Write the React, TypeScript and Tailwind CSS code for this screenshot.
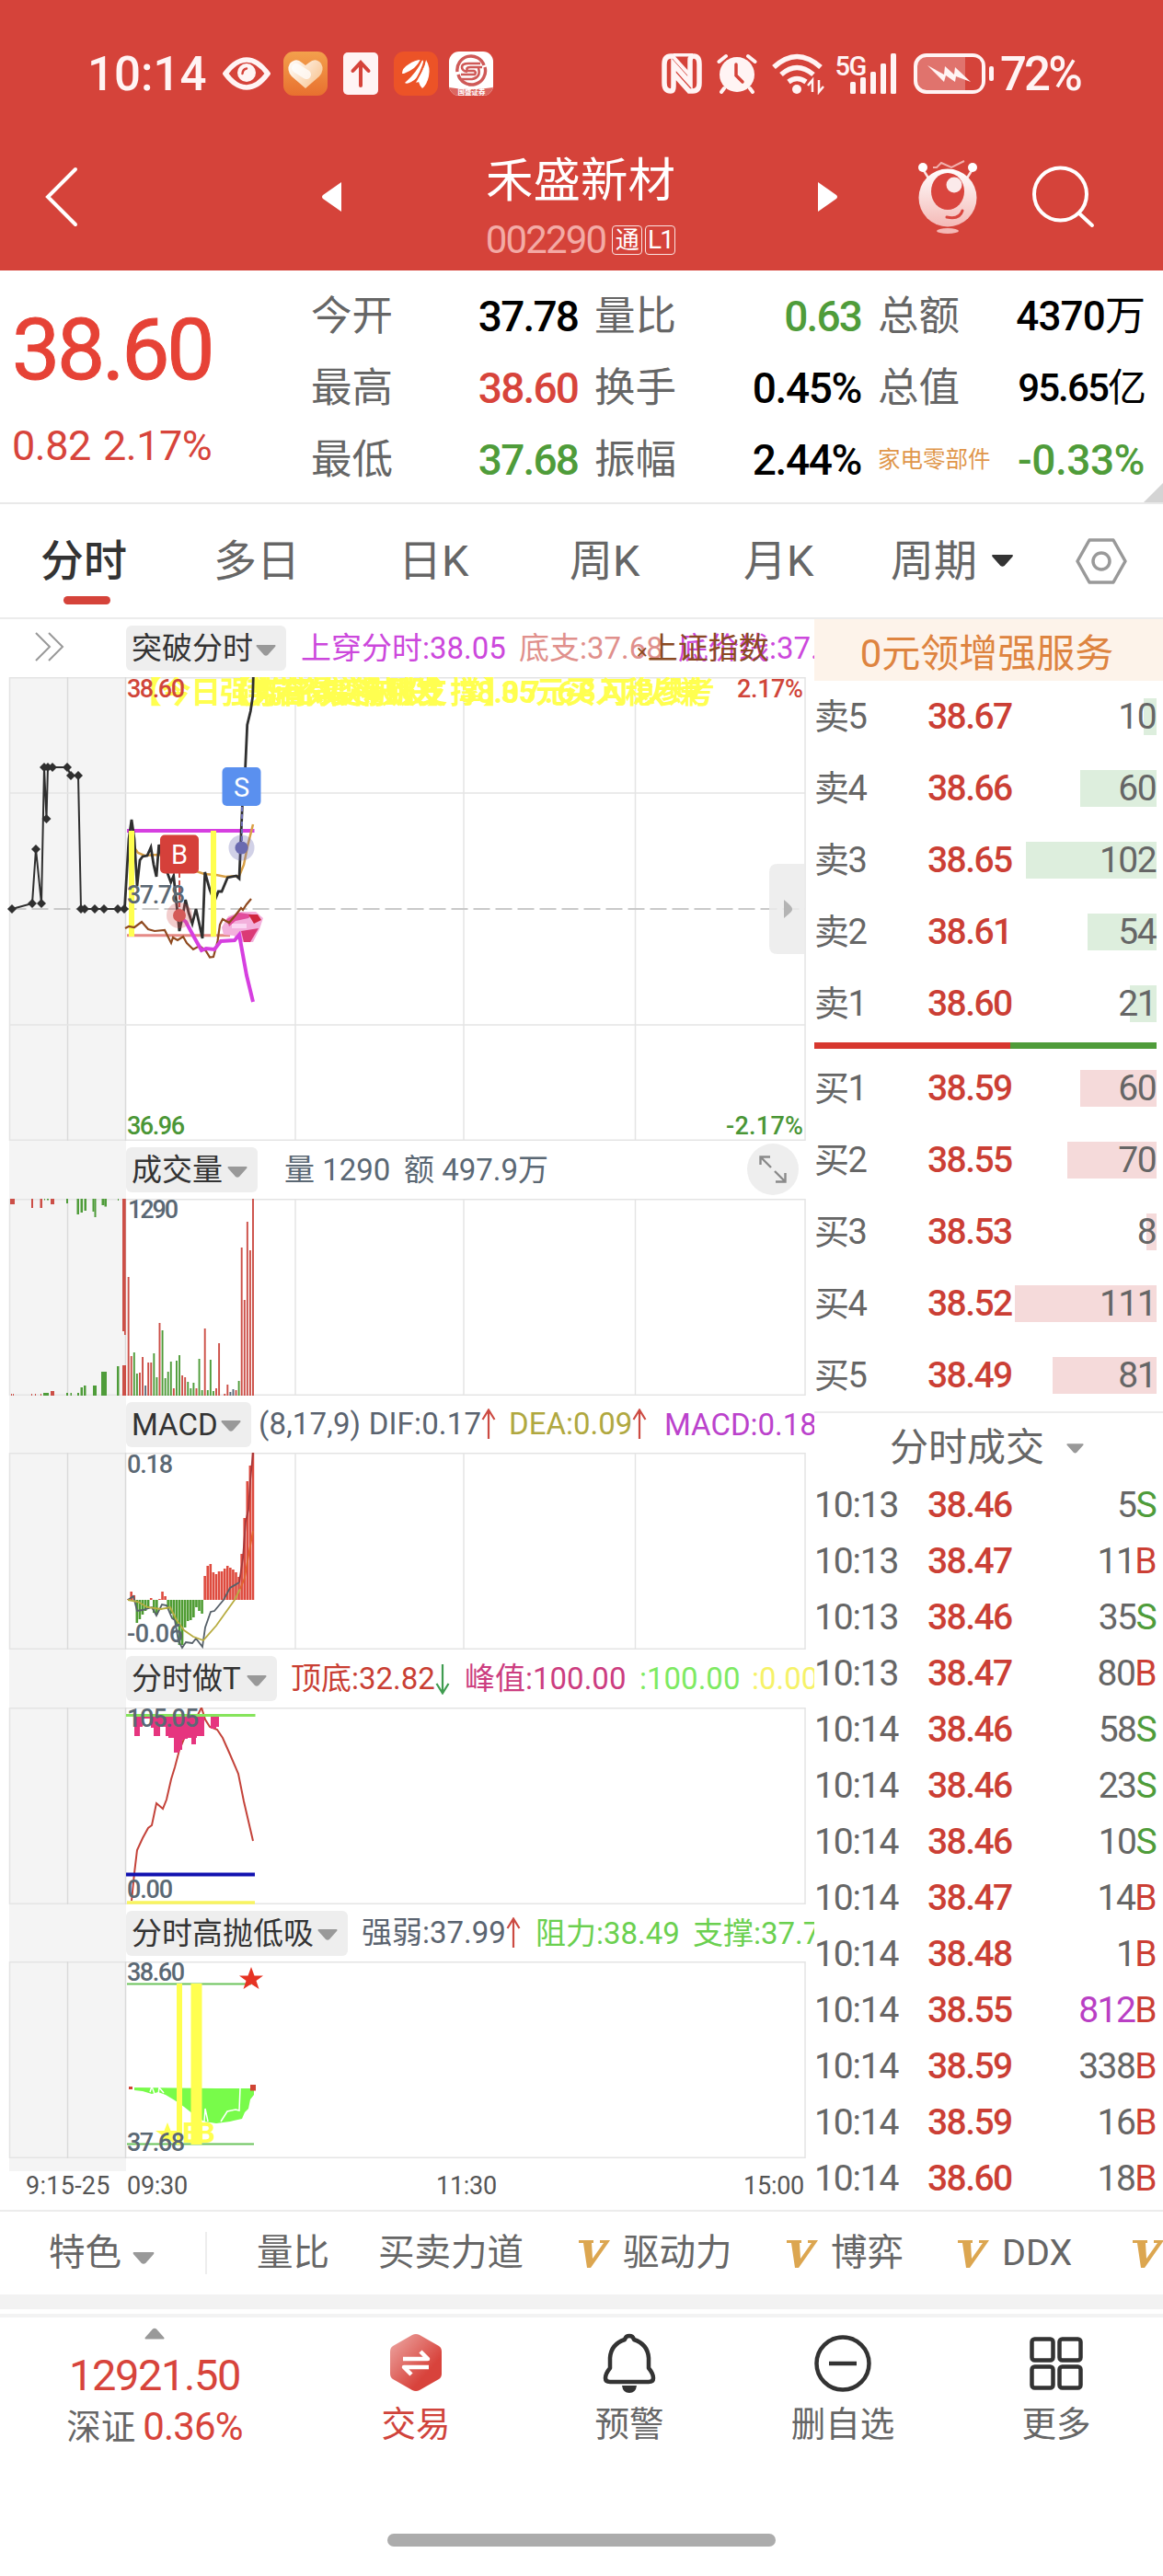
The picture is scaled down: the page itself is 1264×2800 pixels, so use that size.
import React from "react";
import clsx from "clsx";

type Side = "S" | "B";
type BarColor = "r" | "g" | "n";

interface BookRow {
  label: string;
  price: string;
  volume: string;
  width: number;
}

interface Trade {
  time: string;
  price: string;
  volume: string;
  side: Side;
  large?: boolean;
}

interface Metric {
  text: string;
  className: string;
  arrow?: "up" | "down";
}

const SELLS: BookRow[] = [
  { label: "卖5", price: "38.67", volume: "10", width: 14 },
  { label: "卖4", price: "38.66", volume: "60", width: 83 },
  { label: "卖3", price: "38.65", volume: "102", width: 142 },
  { label: "卖2", price: "38.61", volume: "54", width: 75 },
  { label: "卖1", price: "38.60", volume: "21", width: 29 },
];

const BUYS: BookRow[] = [
  { label: "买1", price: "38.59", volume: "60", width: 83 },
  { label: "买2", price: "38.55", volume: "70", width: 97 },
  { label: "买3", price: "38.53", volume: "8", width: 11 },
  { label: "买4", price: "38.52", volume: "111", width: 154 },
  { label: "买5", price: "38.49", volume: "81", width: 113 },
];

const TRADES: Trade[] = [
  { time: "10:13", price: "38.46", volume: "5", side: "S" },
  { time: "10:13", price: "38.47", volume: "11", side: "B" },
  { time: "10:13", price: "38.46", volume: "35", side: "S" },
  { time: "10:13", price: "38.47", volume: "80", side: "B" },
  { time: "10:14", price: "38.46", volume: "58", side: "S" },
  { time: "10:14", price: "38.46", volume: "23", side: "S" },
  { time: "10:14", price: "38.46", volume: "10", side: "S" },
  { time: "10:14", price: "38.47", volume: "14", side: "B" },
  { time: "10:14", price: "38.48", volume: "1", side: "B" },
  { time: "10:14", price: "38.55", volume: "812", side: "B", large: true },
  { time: "10:14", price: "38.59", volume: "338", side: "B" },
  { time: "10:14", price: "38.59", volume: "16", side: "B" },
  { time: "10:14", price: "38.60", volume: "18", side: "B" },
];

// one bar per minute from 09:30, height in chart pixels
const VOLUME: Array<[number, BarColor]> = [
  [129, "r"], [43, "r"], [47, "g"], [24, "g"], [25, "r"], [42, "r"], [11, "n"], [36, "r"], [36, "r"],
  [46, "g"], [20, "g"], [79, "r"], [71, "g"], [19, "g"], [26, "g"], [37, "g"], [8, "r"], [38, "g"],
  [44, "g"], [22, "r"], [20, "r"], [15, "g"], [8, "g"], [14, "g"], [8, "r"], [40, "g"], [6, "g"],
  [73, "r"], [6, "g"], [39, "g"], [5, "g"], [8, "r"], [57, "r"], [0, "r"], [2, "r"], [12, "r"],
  [4, "n"], [7, "n"], [6, "r"], [16, "g"], [161, "r"], [104, "r"], [189, "r"], [158, "r"], [214, "r"],
];

// x, width, height
const AUCTION_TOP: Array<[number, number, number, BarColor]> = [
  [11, 5, 6, "r"], [34, 2, 10, "r"], [43.5, 2.5, 10, "r"], [48, 1, 1.5, "g"], [51, 2, 1.5, "g"], [55, 4, 6, "r"],
  [72, 2, 5, "g"], [83.5, 2.5, 17, "g"], [87.5, 2.5, 15, "g"], [91.5, 2.5, 13, "g"], [100.5, 2, 14, "g"],
  [102.5, 2, 20, "g"], [110.5, 3, 7, "g"], [113.5, 2.5, 8.5, "g"], [128, 1, 2, "g"], [133, 2, 144, "r"], [135, 1.7, 148, "r"],
];

const AUCTION_BOTTOM: Array<[number, number, number, BarColor]> = [
  [12, 1, 2, "r"], [14, 1, 2, "r"], [34, 1, 2, "r"], [38, 1, 2, "r"], [44, 1, 2, "r"], [47, 6, 3, "g"], [55, 4, 5, "r"],
  [72, 2, 3, "g"], [76.5, 1.5, 3, "g"], [84, 2, 3, "g"], [87.5, 2.5, 9, "g"], [91, 2.5, 11, "g"], [101, 4, 11, "g"],
  [110, 6, 26, "g"], [127, 2.5, 32, "g"], [133, 4, 33, "r"],
];

const MACD = [
  1, 9, 5, -25, -21, -16, -12, -9, 2, -14, -16, 1, 9, 4, -10, -15, -21, -27, -49, -49, -30, -23, -22, -19, -8, -12, -15,
  26, 37, 39, 30, 28, 31, 31, 34, 37, 35, 33, 30, 25, 50, 89, 129, 146, 160,
];

const minuteX = (i: number) => 139.7 + i * 3.076;

const fillOf = (c: BarColor) => (c === "r" ? "#cc4f47" : c === "g" ? "#4f9c3a" : "#5b6b78");

function Grid({ height, rows = [], cols = [321, 504, 690.5] }: { height: number; rows?: number[]; cols?: number[] }) {
  return (
    <g fill="none" stroke="#e4e4e4" strokeWidth="1.5">
      <rect x="10.5" y="0.75" width="864.5" height={height - 1.5} />
      <path d={`M73.5 0V${height}M136.5 0V${height}`} stroke="#dadada" />
      {cols.map((x) => (
        <path key={x} d={`M${x} 0V${height}`} />
      ))}
      {rows.map((y) => (
        <path key={y} d={`M10.5 ${y}H875`} />
      ))}
    </g>
  );
}

interface AxisTextProps {
  x: number;
  y: number;
  width: number;
  fill?: string;
  children: string;
}

function AxisText({ x, y, width, fill = "#5b6874", children }: AxisTextProps) {
  return (
    <text x={x} y={y} fill={fill} fontSize="27" fontWeight="500" textLength={width}>
      {children}
    </text>
  );
}

function PriceChart() {
  const auction = [
    [13, 252], [35, 246], [39, 187], [45, 246], [48, 98], [50.5, 154], [52, 98], [57, 98], [73, 98], [77, 107],
    [85, 107], [88, 252], [92, 252], [103, 252], [113, 252], [128, 252], [135, 252],
  ];
  return (
    <svg width="885" height="504" viewBox="0 0 885 504" className="block">
      <Grid height={504} rows={[126, 378]} />
      <path d="M10.5 252H875" stroke="#c9c9c9" strokeWidth="2" strokeDasharray="18 6" />
      <g fill="#ffff50" fontSize="33" fontWeight="700">
        <text x="143" y="28" textLength="354">【今日强势有效突破股】</text>
        <text x="240" y="28" textLength="318">【前密集得到支撑】</text>
        <text x="268" y="28" textLength="215">势若得变有破发</text>
        <text x="500" y="28" textLength="277">38.05元买入稳参考</text>
        <text x="545" y="28" textLength="215">37.68可以赚</text>
      </g>
      <path d="M138 167H276.5" stroke="#d63fe0" strokeWidth="4" />
      <path d="M138 280.7H250" stroke="#e58a86" strokeWidth="3" />
      <path
        d="M145 184L150 191L157 194L172 193L200 200L213 211L222 214L235 215L245 217L260 216L265 204L269 184L275 160"
        fill="none"
        stroke="#d9a045"
        strokeWidth="2.5"
      />
      <g fill="none" stroke="#2f2f2f">
        <path d={"M" + auction.map((p) => p.join(" ")).join("L")} strokeWidth="2" />
        <path
          d="M135.5 251L140 176L143 155L146 176L149 227L152 199L155 195L160 194L164 185L167 204L170 217L172.7 182L178 206L182 213L185.7 223L188.7 216L195 276L198 262L201.7 242L205 256L209 268L213 252L217 270L220 284L222.7 212L228 231L233 244L237.3 233L241 233L247.3 218L256.7 216L260 219L263.3 141L266.7 97L268.7 52L272.3 37L274.7 21L275.3 0"
          strokeWidth="2.8"
        />
      </g>
      {auction.map(([x, y], i) => (
        <path key={i} d={`M${x - 5} ${y}L${x} ${y - 5}L${x + 5} ${y}L${x} ${y + 5}Z`} fill="#2f2f2f" />
      ))}
      <path d="M143 167V282M232 167V282" stroke="#ffff50" strokeWidth="6" />
      <g>
        <path d="M241 272L248 260L262 255L278 255L286 262L282 274L275 288L264 288L254 281L243 280Z" fill="#f3b0dc" />
        <path d="M246 263L260 256L274 258L270 262L256 265L249 271Z" fill="#e24c9c" />
        <path d="M270 258H280L284 264L276 268Z" fill="#d0263f" />
        <path d="M252 268H268V273H252Z" fill="#fbd6f2" />
        <path d="M262 276L281 273L272 288H265Z" fill="#db3a76" />
      </g>
      <path
        d="M136 273L140 271L146 272L154 266L161 274L168 276L179 275L186 289L188 283L193 286L199 282L203 289L210 296L217 292L224 298L228 304.5L232 304L236.5 287L239 269L242 263L249 267L255 260L262 251L264 253L268 247L273 241"
        fill="none"
        stroke="#8f4a20"
        strokeWidth="2.2"
      />
      <path
        d="M195 260L202 266L210 281L219 297L224 295L233 296L240 287L255 286L260 280L268 324L275 353"
        fill="none"
        stroke="#d63fe0"
        strokeWidth="4"
      />
      <AxisText x={138} y={22} width={63} fill="#d0453a">38.60</AxisText>
      <AxisText x={138} y={245.5} width={63}>37.78</AxisText>
      <AxisText x={138} y={497} width={63} fill="#4a9636">36.96</AxisText>
      <AxisText x={801} y={22} width={72} fill="#d0453a">2.17%</AxisText>
      <AxisText x={789} y={497} width={84} fill="#4a9636">-2.17%</AxisText>

      <path d="M195 213V252" stroke="#d0504a" strokeWidth="2" strokeDasharray="5 3" />
      <circle cx="195" cy="259" r="14" fill="#d45a58" fillOpacity="0.3" />
      <circle cx="195" cy="259" r="7" fill="#d45a58" />
      <path d="M263 141V180" stroke="#6f6fb5" strokeWidth="2" strokeDasharray="5 3" />
      <circle cx="262.5" cy="185.5" r="14" fill="#6f6fb5" fillOpacity="0.32" />
      <circle cx="262.5" cy="185.5" r="7" fill="#6a6ab0" />
      <rect x="174" y="171.5" width="42" height="42" rx="5" fill="#d5403a" />
      <rect x="241.5" y="98" width="42" height="42" rx="5" fill="#5a90ef" />
      <g fill="#fff" fontSize="29" textAnchor="middle">
        <text x="195" y="203">B</text>
        <text x="262.5" y="129.5">S</text>
      </g>
      <path d="M875 203H845Q836 203 836 212V292Q836 301 845 301H875Z" fill="#ebebeb" fillOpacity="0.85" />
      <path d="M852 242Q862 250 861 252.5Q862 254 852 262Z" fill="#b4b4b4" />
    </svg>
  );
}

function VolumeChart() {
  return (
    <svg width="885" height="214" viewBox="0 0 885 214" className="block">
      <Grid height={214} />
      {AUCTION_TOP.map(([x, w, h, c], i) => (
        <rect key={i} x={x} y="0" width={w} height={h} fill={fillOf(c)} />
      ))}
      {AUCTION_BOTTOM.map(([x, w, h, c], i) => (
        <rect key={i} x={x} y={214 - h} width={w} height={h} fill={fillOf(c)} />
      ))}
      {VOLUME.map(([h, c], i) => (
        <rect key={i} x={minuteX(i) - 1} y={214 - h} width="1.9" height={h} fill={fillOf(c)} />
      ))}
      <AxisText x={139} y={21} width={55}>1290</AxisText>
    </svg>
  );
}

function MacdChart() {
  return (
    <svg width="885" height="214" viewBox="0 0 885 214" className="block">
      <Grid height={214} />
      {MACD.map((v, i) => (
        <rect
          key={i}
          x={minuteX(i) - 1.4}
          y={v > 0 ? 160 - v : 160}
          width="2.6"
          height={Math.abs(v)}
          fill={v > 0 ? "#de4b3f" : "#4f9c33"}
        />
      ))}
      <g fill="none" strokeWidth="1.8">
        <path
          d="M139 160L145 156L149 172L155 171L165 168L170 177L176 165L181 166L187 180L190 182L194 205L198 212L202 206L209 207L213 202L220 211L223 190L229 173L233 172L243 160L250 147L260 141"
          stroke="#566069"
        />
        <path d="M260 141L264 115L267 75L270 62L272 30L275 0" stroke="#a5383a" />
        <path d="M139 160L150 162L160 168L175 170L185 168L192 182L200 193L210 200L221 204L235 188L255 160L261 148" stroke="#b8ac40" />
        <path d="M261 148L266 136L270 112L275 85" stroke="#e0642e" />
      </g>
      <AxisText x={138} y={22} width={50}>0.18</AxisText>
      <AxisText x={138} y={206} width={61}>-0.06</AxisText>
    </svg>
  );
}

function TopBottomChart() {
  return (
    <svg width="885" height="214" viewBox="0 0 885 214" className="block">
      <Grid height={214} cols={[]} />
      <path
        d="M143 210L146 180L149 155L155 142L161 131L165 128L170 104L177 110L181 100L186 78L190 65L195 46L204 24L213 12L219 0L223 13L228 21L236 24L242 33L250 51L259 72L265 102L275 145"
        fill="none"
        stroke="#c4433a"
        strokeWidth="2"
      />
      <path
        d="M146 10H222V31H214V33H213V40H208V33H204V34H201V35H198V46H195V49H189V33H183V31H180V21H174V31H167V22H164V12H155V21H152V31H146ZM229 10H238V21H235V23H229Z"
        fill="#e6357f"
      />
      <path d="M137 8.5H277.5" stroke="#86e45c" strokeWidth="3" />
      <path d="M137 181.5H277" stroke="#1212b0" strokeWidth="4" />
      <path d="M138 212H277" stroke="#f8f460" strokeWidth="3.5" />
      <AxisText x={138} y={21} width={78}>105.05</AxisText>
      <AxisText x={138} y={207} width={50}>0.00</AxisText>
    </svg>
  );
}

function SwingChart() {
  return (
    <svg width="885" height="214" viewBox="0 0 885 214" className="block">
      <Grid height={214} cols={[]} />
      <path d="M138 24.5H273M138 198.5H276" stroke="#6cc45c" strokeWidth="2" />
      <path
        d="M146 137L235 138H276V145L272 150L270 160L266 164L263 171L250 174L235 176L222 174L210 166L200 158L190 151L180 145L172 142L165 144L155 141L146 140Z"
        fill="#78fb4a"
      />
      <path
        d="M163 142L165 136L168 144M172 145L173 137L178 143M222 174L223 160L226 174M240 174L247 163L256 161L260 162L261 138"
        fill="none"
        stroke="#fff"
        strokeWidth="1.5"
      />
      <path d="M140 136H144V139H140ZM272 134H278V140.5H272Z" fill="#cf4434" />
      <path d="M195 24V199M210.5 24V199M216.5 24V199" stroke="#ffff50" strokeWidth="6" />
      <path d="M182 175L185.5 184H195L187.5 189.5L190 198L182 193L174 198L177 189.5L169 184H178.5Z" fill="#ffff50" />
      <text x="198" y="197" fill="#ffff50" fontSize="32" fontWeight="700" textLength="36">BB</text>
      <path d="M273 6L276.5 15.5H286L278.5 21L281.5 30L273 24.5L264.5 30L267.5 21L260 15.5H269.5Z" fill="#e63323" />
      <AxisText x={138} y={21} width={63}>38.60</AxisText>
      <AxisText x={138} y={206} width={63}>37.68</AxisText>
    </svg>
  );
}

function Triangle({ className }: { className?: string }) {
  return (
    <svg viewBox="0 0 22 12" className={clsx("shrink-0", className)} fill="currentColor">
      <path d="M1 0H21Q22 1 21 2L13 11Q11 12.5 9 11L1 2Q0 1 1 0Z" />
    </svg>
  );
}

function MetricArrow({ dir }: { dir: "up" | "down" }) {
  return (
    <svg
      viewBox="0 0 16 34"
      className={clsx("inline-block h-[34px] w-4 align-[-6px]", dir === "up" ? "text-[#cc4a42]" : "rotate-180 text-[#3f9c50]")}
      fill="none"
      stroke="currentColor"
      strokeWidth="2.2"
    >
      <path d="M8 33V2M1.5 12L8 1.5L14.5 12" />
    </svg>
  );
}

interface PanelHeaderProps {
  name: string;
  className: string;
  chipClass: string;
  metrics: Metric[];
  children?: React.ReactNode;
}

function PanelHeader({ name, className, chipClass, metrics, children }: PanelHeaderProps) {
  return (
    <div className={clsx("relative flex items-center overflow-hidden pl-[137px] whitespace-nowrap", className)}>
      <div className={clsx("flex h-[49px] shrink-0 items-center justify-between rounded-md bg-[#eeeeee] pr-[11px] pl-[6px] text-[33px] text-[#333]", chipClass)}>
        <span>{name}</span>
        <Triangle className="mt-1 h-3 w-[22px] text-[#999]" />
      </div>
      {metrics.map((m) => (
        <span key={m.text} className={clsx("shrink-0 text-[33px]", m.className)}>
          {m.text}
          {m.arrow && <MetricArrow dir={m.arrow} />}
        </span>
      ))}
      {children}
    </div>
  );
}

function ChartColumn() {
  return (
    <div className="w-[885px] shrink-0">
      <PanelHeader
        name="突破分时"
        className="h-[63px]"
        chipClass="w-[174px]"
        metrics={[
          { text: "上穿分时:38.05", className: "ml-4 w-[237px] text-[#cc48dc]" },
          { text: "底支:37.68", className: "w-[173px] text-[#e0908c]" },
          { text: "底价线:37.68", className: "text-[#cc48dc]" },
        ]}
      >
        <span className="absolute top-[15px] left-[692px] text-[33px] text-[#8a4a22]">
          <span className="text-[22px]">×</span>上证指数
        </span>
        <svg viewBox="0 0 32 32" className="absolute top-[14px] left-[38px] size-8" fill="none" stroke="#999" strokeWidth="2">
          <path d="M1 1L16 16L1 31M15 1L30 16L15 31" />
        </svg>
      </PanelHeader>
      <div className="bg-[linear-gradient(90deg,transparent_10px,#f4f4f4_10px,#f4f4f4_137px,transparent_137px)] pb-[14px]">
        <PriceChart />
        <PanelHeader
          name="成交量"
          className="h-[63px]"
          chipClass="w-[143px]"
          metrics={[
            { text: "量 1290", className: "ml-[29px] w-[130px] text-[#5b6874]" },
            { text: "额 497.9万", className: "text-[#5b6874]" },
          ]}
        >
          <div className="absolute top-[3px] left-[812px] flex size-14 items-center justify-center rounded-full bg-[#eeeeee]">
            <svg viewBox="0 0 30 30" className="size-[30px]" fill="none" stroke="#8a8a8a" strokeWidth="2.4">
              <path d="M1.5 10V1.5H12M1.5 1.5L13 13M17 17L28.5 28.5M28.5 19V28.5H18" />
            </svg>
          </div>
        </PanelHeader>
        <VolumeChart />
        <PanelHeader
          name="MACD"
          className="h-[62px]"
          chipClass="w-[136px]"
          metrics={[
            { text: "(8,17,9) DIF:0.17", arrow: "up", className: "ml-2 w-[272px] tracking-[0.005em] text-[#5b6470]" },
            { text: "DEA:0.09", arrow: "up", className: "w-[169px] text-[#b0a840]" },
            { text: "MACD:0.18", className: "text-[#bb42cc]" },
          ]}
        />
        <MacdChart />
        <PanelHeader
          name="分时做T"
          className="h-[63px]"
          chipClass="w-[164px]"
          metrics={[
            { text: "顶底:32.82", arrow: "down", className: "ml-[15px] w-[189px] text-[#c93f34]" },
            { text: "峰值:100.00", className: "w-[190px] text-[#cc3d80]" },
            { text: ":100.00", className: "w-[122px] text-[#7eea62]" },
            { text: ":0.00", className: "text-[#f6f268]" },
          ]}
        />
        <TopBottomChart />
        <PanelHeader
          name="分时高抛低吸"
          className="h-[62px]"
          chipClass="w-[241px]"
          metrics={[
            { text: "强弱:37.99", arrow: "up", className: "ml-[15px] w-[189px] text-[#5b6470]" },
            { text: "阻力:38.49", className: "w-[171px] text-[#6bd050]" },
            { text: "支撑:37.71", className: "text-[#6bd050]" },
          ]}
        />
        <SwingChart />
      </div>
      <div className="flex h-8 items-center pr-[11px] pl-7 text-[27px] text-[#555]">
        <span className="w-[110px] tracking-[0.01em]">9:15-25</span>
        <span className="w-[336px] tracking-[-0.01em]">09:30</span>
        <span className="tracking-[-0.01em]">11:30</span>
        <span className="ml-auto tracking-[-0.01em]">15:00</span>
      </div>
    </div>
  );
}

function BookLine({ row, sell }: { row: BookRow; sell?: boolean }) {
  return (
    <div className="relative flex h-[78px] items-center pr-2 text-[39px] tracking-[-0.04em] text-[#666]">
      <div
        className={clsx("absolute top-[19px] right-[7px] h-10", sell ? "bg-[#ddeedd]" : "bg-[#f5dada]")}
        style={{ width: row.width }}
      />
      <span className="relative w-[123px] text-[38px]">{row.label}</span>
      <span className="relative font-medium text-[#cb3f35]">{row.price}</span>
      <span className="relative ml-auto">{row.volume}</span>
    </div>
  );
}

function OrderColumn() {
  return (
    <div className="flex-1">
      <div className="flex h-[67px] items-center justify-center bg-[#fdf3ea] pt-2 pr-1 text-[42px] text-[#de8440]">
        <span>0元领增强服务</span>
      </div>
      {SELLS.map((row) => (
        <BookLine key={row.label} row={row} sell />
      ))}
      <div className="mt-[3px] mr-[7px] mb-1 flex h-[7px]">
        <div className="w-[213px] bg-[#d7382f]" />
        <div className="flex-1 bg-[#4f9c3a]" />
      </div>
      {BUYS.map((row) => (
        <BookLine key={row.label} row={row} />
      ))}
      <div className="mb-[2px] flex h-[70px] items-center border-t-2 border-[#ececec] pt-2 pl-[82px] text-[42px] text-[#666]">
        分时成交
        <Triangle className="ml-6 h-[11px] w-[19px] text-[#999]" />
      </div>
      {TRADES.map((t, i) => (
        <div key={i} className="flex h-[61px] items-center pr-2 text-[39px] tracking-[-0.04em] text-[#666]">
          <span className="w-[123px] tracking-[-0.03em]">{t.time}</span>
          <span className="font-medium text-[#cb3f35]">{t.price}</span>
          <span className={clsx("ml-auto", t.large && "text-[#b93fc4]")}>{t.volume}</span>
          <span className={t.side === "B" ? "text-[#cb3f35]" : "text-[#4f9c3a]"}>{t.side}</span>
        </div>
      ))}
    </div>
  );
}

function StatusBar() {
  return (
    <div className="flex h-[160px] items-center pr-[90px] pl-[95px] text-[51px] font-medium tracking-[-0.02em] text-[#fff4f4]">
      <span className="w-[147px] tracking-normal">10:14</span>
      <svg viewBox="0 0 52 36" className="h-9 w-[52px]" fill="none">
        <path d="M3 18Q14 3 26 3T49 18Q38 33 26 33T3 18Z" stroke="#fff4f4" strokeWidth="5.5" />
        <circle cx="26" cy="17" r="10" fill="#fff4f4" />
        <path d="M21.5 18Q22 13 26 12.5" stroke="#d5433a" strokeWidth="2.5" strokeLinecap="round" />
      </svg>
      <svg viewBox="0 0 48 48" className="ml-[14px] size-12">
        <defs>
          <linearGradient id="heartTile" x1="0" y1="0" x2="0" y2="1">
            <stop offset="0" stopColor="#f3a04c" />
            <stop offset="1" stopColor="#e8702f" />
          </linearGradient>
          <linearGradient id="heart" x1="0" y1="0" x2="1" y2="0.6">
            <stop offset="0" stopColor="#fff" />
            <stop offset="1" stopColor="#f9c898" />
          </linearGradient>
        </defs>
        <rect width="48" height="48" rx="11" fill="url(#heartTile)" />
        <path d="M24 40L9 27Q3 20 7 13Q14 6 20 12L24 15L28 12Q35 6 41 13Q45 20 39 27Z" fill="url(#heart)" />
        <path d="M14 18L25 25" stroke="#fff" strokeWidth="10" strokeLinecap="round" opacity="0.75" />
      </svg>
      <svg viewBox="0 0 38 46" className="ml-[17px] h-[46px] w-[38px]">
        <rect width="38" height="46" rx="5" fill="#fff4f4" />
        <path d="M19 36V11M10.5 20L19 11L27.5 20" fill="none" stroke="#d5433a" strokeWidth="4" strokeLinecap="round" />
      </svg>
      <svg viewBox="0 0 48 48" className="ml-[17px] size-12">
        <rect width="48" height="48" rx="11" fill="#ec5327" />
        <g fill="#fff">
          <path d="M9 24Q9 18 16 14Q23 9 30 9Q24 19 11 24Z" />
          <path d="M12 34Q25 23 31 9Q35 13 30 22Q26 29 19 33Q14 36 12 34Z" />
          <path d="M23 33Q33 21 35 9Q40 17 38 27Q36 36 31 40Q28 37 27 33Q25 34 23 33Z" />
        </g>
        <path d="M9 30Q24 22 31 7M20 38Q31 22 34 8" fill="none" stroke="#ec5327" strokeWidth="2" />
      </svg>
      <svg viewBox="0 0 48 48" className="ml-3 size-12 overflow-hidden rounded-[11px]">
        <rect width="48" height="48" fill="#fff" />
        <path d="M0 39Q24 43 48 39V48H0Z" fill="#dc6660" />
        <g fill="none" stroke="#cf5a58" strokeWidth="3.4">
          <path d="M9 22A15 15 0 0 1 38 15M39 17A15 15 0 0 1 10 25" />
          <path d="M34 13H21Q14 13 14 17Q14 21 20 22M36 17H23Q18 17 20 21H27Q30 22 28 25H13M32 18Q35 28 25 30H14" strokeWidth="2.6" />
        </g>
        <text x="9.5" y="47" fontSize="7.5" fontWeight="700" fill="#fff" textLength="29">国盛证券</text>
      </svg>

      <svg viewBox="0 0 44 44" className="ml-auto size-11" fill="none" stroke="#fff4f4">
        <path d="M14 3H10Q3 3 3 12V32Q3 41 10 41Q13 41 13 36V12L31 32V8Q31 3 35 3Q41 3 41 12V32Q41 41 34 41H30L13 22" strokeWidth="5.5" />
        <path d="M12 3L31 24M13 1.5H34" strokeWidth="4" />
      </svg>
      <svg viewBox="0 0 44 44" className="ml-4 size-11" fill="none" stroke="#fff4f4" strokeLinecap="round">
        <circle cx="22" cy="23" r="19" fill="#fff4f4" stroke="none" />
        <path d="M2.5 9L10 3M41.5 9L34 3" strokeWidth="4" />
        <path d="M8 38L5 42M36 38L39 42" strokeWidth="4" />
        <path d="M21 12V24L28 31" stroke="#d5433a" strokeWidth="3.5" />
      </svg>
      <svg viewBox="0 0 58 46" className="ml-4 h-[46px] w-[58px]" fill="none" stroke="#fff4f4" strokeWidth="5.5">
        <path d="M2 16Q27 -7 53 16" />
        <path d="M10 24Q27 9 45 24" />
        <path d="M18 32Q27 25 37 32" />
        <circle cx="27" cy="40" r="5" fill="#fff4f4" stroke="none" />
        <path d="M44 43V30L39 36M51 30V43L56 37" strokeWidth="2.5" />
      </svg>
      <div className="ml-[11px] flex items-start">
        <span className="-mr-[17px] text-[29px] leading-none tracking-[-0.05em]">5G</span>
        <svg viewBox="0 0 52 44" className="h-11 w-[52px]" fill="#fff4f4">
          <rect x="0" y="31" width="6" height="13" rx="1.5" />
          <rect x="11" y="26" width="6" height="18" rx="1.5" />
          <rect x="22" y="20" width="6" height="24" rx="1.5" />
          <rect x="33" y="11" width="6" height="33" rx="1.5" />
          <rect x="44" y="0" width="6" height="44" rx="1.5" />
        </svg>
      </div>
      <svg viewBox="0 0 88 44" className="ml-[17px] h-11 w-[88px]">
        <rect x="2" y="2" width="74" height="40" rx="12" fill="#e0736d" stroke="#fff4f4" strokeWidth="4" />
        <path d="M56 4H64Q74 4 74 14V30Q74 40 64 40H56Z" fill="#d5433a" />
        <rect x="82" y="14" width="5" height="16" rx="2" fill="#fff4f4" />
        <path d="M15 13L33 23L34 14L44 23L45 15L62 31L46 25L45 31L35 24L33 31Z" fill="#fff4f4" />
      </svg>
      <span className="ml-[6px] tracking-[-0.055em]">72%</span>
    </div>
  );
}

function NavBar() {
  return (
    <div className="flex h-[134px] items-start text-white">
      <svg viewBox="0 0 36 66" className="mt-[21px] ml-[49px] h-[66px] w-9" fill="none" stroke="#fff" strokeWidth="4" strokeLinecap="round">
        <path d="M33 3L3 33L33 63" />
      </svg>
      <svg viewBox="0 0 21 32" className="mt-[38px] ml-[265px] h-8 w-[21px]" fill="#fff">
        <path d="M21 0V32L1 18Q-1 16 1 14Z" />
      </svg>
      <div className="ml-[147px] flex w-[226px] flex-col items-center">
        <div className="mt-[9px] text-[51.5px] leading-[56px]">禾盛新材</div>
        <div className="mt-[15px] flex items-center gap-[3px] leading-none">
          <span className="mr-1 text-[42px] tracking-[-0.045em] text-[#f3aaa5]">002290</span>
          <span className="flex h-8 w-[33px] items-center justify-center rounded border-[1.5px] border-[#fbe3e1] text-[26px]">通</span>
          <span className="flex h-8 w-[33px] items-center justify-center rounded border-[1.5px] border-[#fbe3e1] text-[28px] tracking-[-0.06em]">L1</span>
        </div>
      </div>
      <svg viewBox="0 0 21 32" className="mt-[38px] ml-[145px] h-8 w-[21px]" fill="#fff">
        <path d="M0 0V32L20 18Q22 16 20 14Z" />
      </svg>
      <svg viewBox="0 0 64 80" className="mt-[14px] ml-[88px] h-20 w-16">
        <defs>
          <linearGradient id="robot" x1="0" y1="0" x2="0" y2="1">
            <stop offset="0" stopColor="#fff" />
            <stop offset="1" stopColor="#f4b9b6" />
          </linearGradient>
        </defs>
        <path d="M16 8H20L25 3L36 8L50 1" fill="none" stroke="#f2b0ac" strokeWidth="2" />
        <path d="M5 10L12 21M59 10L52 21" stroke="#fbe4e2" strokeWidth="2.5" />
        <circle cx="5" cy="8" r="5" fill="#fff" />
        <circle cx="59" cy="8" r="5" fill="#fff" />
        <ellipse cx="32" cy="77" rx="12" ry="3" fill="#f4b9b6" />
        <circle cx="32" cy="41" r="31.5" fill="url(#robot)" />
        <ellipse cx="32" cy="34" rx="18" ry="20" fill="#d9453e" />
        <circle cx="39" cy="27" r="8.5" fill="#fbeaea" />
        <path d="M31 62Q45 65 48 55" fill="none" stroke="#d9453e" strokeWidth="3" strokeLinecap="round" />
      </svg>
      <svg viewBox="0 0 68 68" className="mt-5 ml-[60px] size-[68px]" fill="none" stroke="#fff" strokeWidth="4" strokeLinecap="round">
        <circle cx="30.5" cy="31" r="28.5" />
        <path d="M51 52L65 65" />
      </svg>
    </div>
  );
}

const QUOTES = [
  [
    { label: "今开", value: "37.78", color: "text-black" },
    { label: "最高", value: "38.60", color: "text-[#d7443b]" },
    { label: "最低", value: "37.68", color: "text-[#4f9c3a]" },
  ],
  [
    { label: "量比", value: "0.63", color: "text-[#4f9c3a]" },
    { label: "换手", value: "0.45%", color: "text-black" },
    { label: "振幅", value: "2.44%", color: "text-black" },
  ],
];

function QuoteSummary() {
  return (
    <div className="relative flex h-[254px] items-start border-b-2 border-[#e9e9e9] pt-[11px]">
      <div className="w-[338px] pl-[13px]">
        <div className="mt-[24px] text-[93px] leading-[104px] tracking-[-0.035em] text-[#e64236] [-webkit-text-stroke:1px_#e64236]">38.60</div>
        <div className="mt-[25px] text-[45px] leading-[54px] tracking-[-0.01em] text-[#d7443b] [word-spacing:0.05em]">0.82 2.17%</div>
      </div>
      {QUOTES.map((col, i) => (
        <div key={i} className={clsx("mr-[18px] flex flex-col", i === 0 ? "w-[290px]" : "w-[290px]")}>
          {col.map((q) => (
            <div key={q.label} className="flex h-[78px] items-center justify-between">
              <span className="text-[44.5px] text-[#666]">{q.label}</span>
              <span
                className={clsx(
                  "text-[46px] font-medium",
                  q.value.endsWith("%") ? "tracking-[-0.03em]" : "tracking-[-0.04em]",
                  q.color
                )}
              >
                {q.value}
              </span>
            </div>
          ))}
        </div>
      ))}
      <div className="flex w-[290px] flex-col">
        <div className="flex h-[78px] items-center justify-between">
          <span className="text-[44.5px] text-[#666]">总额</span>
          <span className="text-[44px] font-medium tracking-[-0.02em]">4370<span className="font-normal">万</span></span>
        </div>
        <div className="flex h-[78px] items-center justify-between">
          <span className="text-[44.5px] text-[#666]">总值</span>
          <span className="text-[42px] font-medium tracking-[-0.045em]">95.65<span className="font-normal">亿</span></span>
        </div>
        <div className="flex h-[78px] items-center justify-between">
          <span className="text-[24.5px] text-[#e0964a]">家电零部件</span>
          <span className="text-[46px] font-medium tracking-[-0.01em] text-[#4f9c3a]">-0.33%</span>
        </div>
      </div>
      <svg viewBox="0 0 21 21" className="absolute right-0 bottom-0 size-[21px]" fill="#d4d4d4">
        <path d="M21 0V21H0Z" />
      </svg>
    </div>
  );
}

function PeriodTabs() {
  return (
    <div className="flex h-[125px] items-center border-b-2 border-[#ececec] text-[47px] text-[#666]">
      <div className="relative ml-[44px] w-[188px] font-medium text-[#333]">
        分时
        <div className="absolute -bottom-[24px] left-[25px] h-[9px] w-[51px] rounded-full bg-[#d5433a]" />
      </div>
      <span className="w-[201px]">多日</span>
      <span className="w-[186px]">日K</span>
      <span className="w-[189px]">周K</span>
      <span className="w-[160px]">月K</span>
      <span>周期</span>
      <Triangle className="ml-[14px] h-[13px] w-[27px] text-[#333]" />
      <svg viewBox="0 0 56 50" className="ml-[66px] h-[50px] w-14" fill="none" stroke="#999" strokeWidth="3.5" strokeLinejoin="round">
        <path d="M15 2H41L54 25L41 48H15L2 25Z" />
        <circle cx="28" cy="25" r="9" />
      </svg>
    </div>
  );
}

function VipMark() {
  return (
    <svg viewBox="0 0 34 32" className="mt-[2px] mr-[14px] h-8 w-[34px] shrink-0" fill="#dca650">
      <path d="M0 1H16V4H14L15 21L27 4H23V1H34L32 4L13 31H9L5 4H0Z" />
    </svg>
  );
}

function FeatureBar() {
  return (
    <div className="flex h-[92px] shrink-0 items-center overflow-hidden border-t-2 border-[#ececec] text-[39.5px] whitespace-nowrap text-[#666]">
      <span className="ml-[53px] shrink-0">特色</span>
      <Triangle className="mt-[10px] ml-3 h-[15px] w-6 text-[#999]" />
      <div className="ml-[55px] h-[46px] w-[2px] shrink-0 bg-[#eeeeee]" />
      <span className="ml-[54px] w-[132px] shrink-0">量比</span>
      <span className="w-[218px] shrink-0">买卖力道</span>
      <span className="flex w-[226px] shrink-0 items-center"><VipMark />驱动力</span>
      <span className="flex w-[186px] shrink-0 items-center"><VipMark />博弈</span>
      <span className="flex w-[190px] shrink-0 items-center"><VipMark />DDX</span>
      <VipMark />
    </div>
  );
}

function BottomNav() {
  return (
    <div className="flex items-start pt-[9px] text-[37.5px] text-[#666]">
      <div className="flex w-[336px] flex-col items-center">
        <Triangle className="h-[13px] w-[22px] rotate-180 text-[#999]" />
        <div className="mt-3 text-[47px] leading-[54px] tracking-[-0.03em] text-[#d7443b]">12921.50</div>
        <div className="mt-[2px] flex items-center gap-2 leading-[54px]">
          深证<span className="text-[42px] tracking-[-0.02em] text-[#d7443b]">0.36%</span>
        </div>
      </div>
      <div className="flex w-[232px] flex-col items-center">
        <svg viewBox="0 0 58 64" className="mt-[6px] h-16 w-[58px]">
          <defs>
            <linearGradient id="hex" x1="0" y1="0" x2="1" y2="1">
              <stop offset="0" stopColor="#edaaa6" />
              <stop offset="0.7" stopColor="#d8433c" />
            </linearGradient>
          </defs>
          <path d="M25 2Q29 0 33 2L54 14Q57 16 57 20V44Q57 48 54 50L33 62Q29 64 25 62L4 50Q1 48 1 44V20Q1 16 4 14Z" fill="url(#hex)" />
          <path d="M15 28H42L34 20M43 37H16L24 45" fill="none" stroke="#fff" strokeWidth="4.5" strokeLinejoin="round" />
        </svg>
        <span className="mt-[8px] leading-[54px] text-[#d0433b]">交易</span>
      </div>
      <div className="flex w-[232px] flex-col items-center">
        <svg viewBox="0 0 58 66" className="mt-[6px] h-[66px] w-[58px]" fill="none" stroke="#333" strokeWidth="4.5" strokeLinejoin="round">
          <path d="M29 3Q25 3 24 7Q9 12 8 27V38Q3 44 3 49Q3 53 8 53H50Q55 53 55 49Q55 44 50 38V27Q49 12 34 7Q33 3 29 3Z" />
          <path d="M21 57H37Q36 65 29 65T21 57Z" fill="#333" stroke="none" />
        </svg>
        <span className="mt-[6px] leading-[54px]">预警</span>
      </div>
      <div className="flex w-[232px] flex-col items-center">
        <svg viewBox="0 0 62 62" className="mt-2 size-[62px]" fill="none" stroke="#333" strokeWidth="4.5">
          <circle cx="31" cy="31" r="28.5" />
          <path d="M16 31H46" />
        </svg>
        <span className="mt-2 leading-[54px]">删自选</span>
      </div>
      <div className="flex w-[232px] flex-col items-center">
        <svg viewBox="0 0 58 58" className="mt-[10px] size-[58px]" fill="none" stroke="#333" strokeWidth="4.5">
          <rect x="2.5" y="2.5" width="23" height="23" rx="3" />
          <rect x="32.5" y="2.5" width="23" height="23" rx="3" />
          <rect x="2.5" y="32.5" width="23" height="23" rx="3" />
          <rect x="32.5" y="32.5" width="23" height="23" rx="3" />
        </svg>
        <span className="mt-[10px] leading-[54px]">更多</span>
      </div>
    </div>
  );
}

export default function App() {
  return (
    <div className="flex h-[2800px] w-[1264px] flex-col overflow-hidden bg-white font-['Roboto','Noto_Sans_CJK_SC',sans-serif] leading-none text-black">
      <header className="h-[294px] shrink-0 bg-[#d5433a]">
        <StatusBar />
        <NavBar />
      </header>
      <QuoteSummary />
      <PeriodTabs />
      <main className="flex h-[1729px] shrink-0">
        <ChartColumn />
        <OrderColumn />
      </main>
      <FeatureBar />
      <div className="mb-[5px] h-4 shrink-0 bg-[#f2f2f2]" />
      <div className="mb-[2px] h-1 shrink-0 bg-[#f3f3f3]" />
      <BottomNav />
      <div className="mx-auto mt-auto mb-[32px] h-[14px] w-[422px] shrink-0 rounded-full bg-[#acacac]" />
    </div>
  );
}
